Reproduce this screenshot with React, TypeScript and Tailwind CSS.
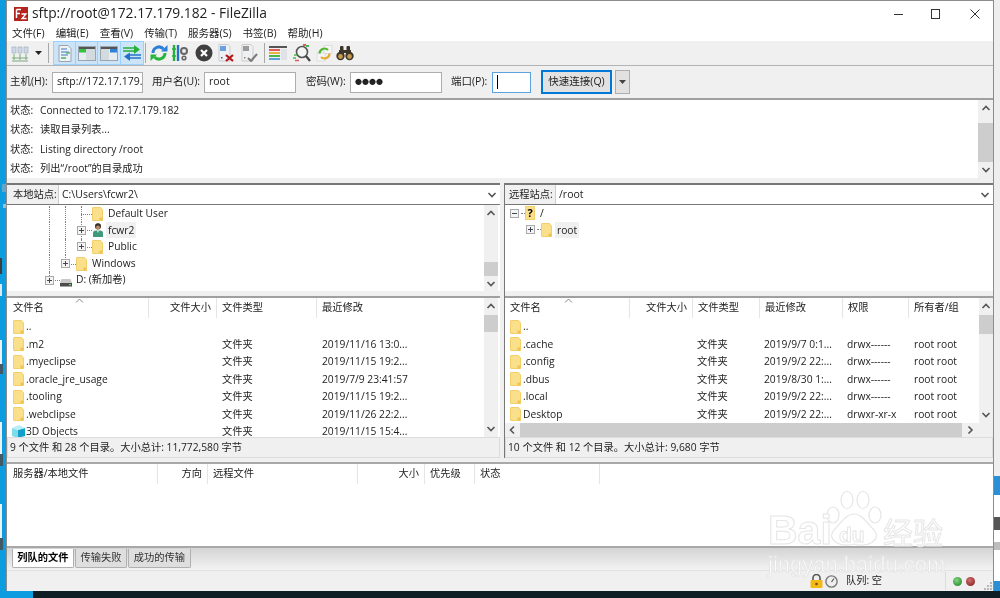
import React from "react";

const Folder = ({ cls = "" }: { cls?: string }) => (
  <svg width="11" height="14" viewBox="0 0 11 14" className={`shrink-0 ${cls}`}>
    <path d="M0.5 1 Q0.5 0.5 1 0.5 H8 Q9 0.5 9.5 1.5 L10.5 3 V13.5 H1 Q0.5 13.5 0.5 13 Z" fill="#fbe08c" stroke="#f3cf6b" />
    <path d="M7.5 13.5 V10.5 H10.5 V13.5 Z" fill="#f0c350" />
  </svg>
);

const Chevron = ({ dir = "up", cls = "" }: { dir?: "up" | "down" | "left" | "right"; cls?: string }) => {
  const p = {
    up: "M1.5 6 L5 2.5 L8.5 6",
    down: "M1.5 3 L5 6.5 L8.5 3",
    left: "M6 1.5 L2.5 5 L6 8.5",
    right: "M3.5 1.5 L7 5 L3.5 8.5",
  }[dir];
  return (
    <svg width="10" height="10" viewBox="0 0 10 10" className={`shrink-0 ${cls}`}>
      <path d={p} fill="none" stroke="#555" strokeWidth="1.6" />
    </svg>
  );
};

const VBar = ({ spacer, thumb, cls = "" }: { spacer: string; thumb: string; cls?: string }) => (
  <div className={`flex flex-col items-center justify-between bg-[#f0f0f0] ${cls}`}>
    <div className="flex flex-col items-center w-full">
      <div className="h-[17px] flex items-center"><Chevron dir="up" /></div>
      <div className={spacer} />
      <div className={`w-full bg-[#cdcdcd] ${thumb}`} />
    </div>
    <div className="h-[17px] flex items-center"><Chevron dir="down" /></div>
  </div>
);

const Expander = ({ minus = false }: { minus?: boolean }) => (
  <span className="w-[9px] h-[9px] border border-[#a9a9a9] bg-[#f4f4f4] flex items-center justify-center shrink-0 relative">
    <svg width="7" height="7" viewBox="0 0 7 7">
      <path d={minus ? "M1 3.5 H6" : "M1 3.5 H6 M3.5 1 V6"} stroke="#445" strokeWidth="1" />
    </svg>
  </span>
);

const Guide = () => <span className="w-[16px] h-full shrink-0 flex justify-center"><span className="h-full border-l border-dotted border-[#808080]" /></span>;

const Branch = ({ plus, last = false }: { plus: boolean; last?: boolean }) => (
  <span className="w-[16px] h-full shrink-0 flex items-center justify-center relative">
    <span className={`absolute left-[8px] top-0 border-l border-dotted border-[#808080] ${last ? "h-1/2" : "h-full"}`} />
    <span className="absolute left-[8px] right-[-3px] top-1/2 border-t border-dotted border-[#808080]" />
    {plus && <Expander />}
  </span>
);

const UserIcon = () => (
  <svg width="12" height="14" viewBox="0 0 12 14" className="shrink-0">
    <circle cx="6" cy="3.6" r="3" fill="#7a5a3c" />
    <circle cx="6" cy="3" r="2.8" fill="#3b3029" />
    <circle cx="6" cy="4.5" r="2" fill="#b98a63" />
    <path d="M1 14 V10 Q1 7.5 4 7.5 H8 Q11 7.5 11 10 V14 Z" fill="#3e9a78" />
    <path d="M5 7.5 L6 10 L7 7.5 Z" fill="#e8f3ee" />
  </svg>
);

const Drive = () => (
  <svg width="12" height="14" viewBox="0 0 12 14" className="shrink-0">
    <path d="M1.5 6 H10.5 L12 10 H0 Z" fill="#c8c8c8" />
    <rect x="0" y="10" width="12" height="3.5" fill="#4b4b4b" />
    <rect x="9" y="11" width="2" height="1.3" fill="#5fdc5f" />
  </svg>
);

const Question = () => (
  <span className="w-[10px] h-[14px] bg-[#fbe08c] border border-[#f3cf6b] text-[11px] leading-[12px] font-bold text-black text-center shrink-0">?</span>
);

const TB = ({ children, cls = "" }: { children?: React.ReactNode; cls?: string }) => (
  <span className={`h-[22px] flex items-center justify-center shrink-0 ${cls}`}>{children}</span>
);

const ToolSep = ({ cls = "" }: { cls?: string }) => <span className={`w-px h-[20px] bg-[#a8a8a8] shrink-0 ${cls}`} />;

const Toolbar = () => (
  <div className="h-[24px] bg-[#f0f0f0] flex items-center pl-[4px]">
    <TB cls="w-[18px]">
      <svg width="18" height="18" viewBox="0 0 18 18">
        <path d="M1 14 H17 M3 10 V16 M9 10 V16 M15 10 V16 M1 17 H17" stroke="#7da87d" strokeWidth="1" fill="none" />
        <rect x="1" y="3" width="4" height="6" fill="#cdd8e6" stroke="#9ab" strokeWidth=".6" />
        <rect x="7" y="3" width="4" height="6" fill="#cdd8e6" stroke="#9ab" strokeWidth=".6" />
        <rect x="13" y="3" width="4" height="6" fill="#cdd8e6" stroke="#9ab" strokeWidth=".6" />
      </svg>
    </TB>
    <TB cls="w-[18px]">
      <svg width="7" height="4" viewBox="0 0 7 4"><path d="M0 0 H7 L3.5 4 Z" fill="#222" /></svg>
    </TB>
    <ToolSep cls="ml-[1px]" />
    <div className="flex ml-[4px] bg-[#cce4f7] border border-[#99d1ff] h-[24px] items-center">
      <TB cls="w-[22px] border-r border-[#99d1ff]">
        <svg width="14" height="17" viewBox="0 0 14 17">
          <path d="M1 .5 H10 L13 3.5 V16.5 H1 Z" fill="#eef1f5" stroke="#9aa5b0" />
          <path d="M3 4 H9 M3 7 H11 M3 10 H10" stroke="#3a78c8" strokeWidth="1.2" />
          <path d="M3 13 H8" stroke="#3fae4a" strokeWidth="1.4" />
          <path d="M8 8 H12" stroke="#3fae4a" strokeWidth="1.2" />
        </svg>
      </TB>
      <TB cls="w-[22px] border-r border-[#99d1ff]">
        <svg width="18" height="15" viewBox="0 0 18 15">
          <rect x=".5" y=".5" width="17" height="14" fill="#e6ecef" stroke="#9aa5b0" />
          <rect x="1" y="1" width="16" height="2" fill="#555" />
          <rect x="1" y="3" width="7" height="3.5" fill="#35c23e" />
          <rect x="8" y="3" width="9" height="11" fill="#d4dbdf" />
        </svg>
      </TB>
      <TB cls="w-[23px] border-r border-[#99d1ff]">
        <svg width="18" height="15" viewBox="0 0 18 15">
          <rect x=".5" y=".5" width="17" height="14" fill="#e6ecef" stroke="#9aa5b0" />
          <rect x="1" y="1" width="16" height="2" fill="#555" />
          <rect x="10" y="3" width="7" height="3.5" fill="#2f80d8" />
          <rect x="1" y="3" width="8" height="11" fill="#d4dbdf" />
        </svg>
      </TB>
      <TB cls="w-[22px]">
        <svg width="18" height="16" viewBox="0 0 18 16">
          <path d="M0 3 H14 M0 6 H14" stroke="#25b03a" strokeWidth="1.7" />
          <path d="M11 0 L17 4.5 L11 9 Z" fill="#25b03a" />
          <path d="M4 10 H18 M4 13 H18" stroke="#2472c8" strokeWidth="1.7" />
          <path d="M7 7.5 L1 11.5 L7 16 Z" fill="#2472c8" />
        </svg>
      </TB>
    </div>
    <ToolSep cls="ml-[1px]" />
    <TB cls="w-[22px] ml-[2px]">
      <svg width="18" height="18" viewBox="0 0 18 18">
        <path d="M3 9 A6 6 0 0 1 13.5 5" fill="none" stroke="#2a7fd6" strokeWidth="3" />
        <path d="M11 7.5 H17.5 V1 Z" fill="#2a7fd6" />
        <path d="M15 9 A6 6 0 0 1 4.5 13" fill="none" stroke="#26b53c" strokeWidth="3" />
        <path d="M7 10.5 H.5 V17 Z" fill="#26b53c" />
      </svg>
    </TB>
    <TB cls="w-[20px]">
      <svg width="16" height="18" viewBox="0 0 16 18">
        <path d="M2 1 V17" stroke="#25b03a" strokeWidth="2.4" />
        <path d="M6 1 V17" stroke="#2472c8" strokeWidth="2.4" />
        <path d="M0 5 H4 M0 12 H4" stroke="#25b03a" strokeWidth="1.4" />
        <circle cx="12" cy="7" r="3" fill="none" stroke="#666" strokeWidth="2" />
        <circle cx="12" cy="14" r="1.8" fill="none" stroke="#666" strokeWidth="1.6" />
      </svg>
    </TB>
    <TB cls="w-[23px] ml-[2px]">
      <svg width="18" height="18" viewBox="0 0 18 18">
        <circle cx="9" cy="9" r="8.5" fill="#3f3f3f" />
        <path d="M6 6 L12 12 M12 6 L6 12" stroke="#fff" strokeWidth="2.2" />
      </svg>
    </TB>
    <TB cls="w-[22px]">
      <svg width="18" height="18" viewBox="0 0 18 18">
        <path d="M2 .5 H11 L13 2.5 V17 H2 Z" fill="#eef1f5" stroke="#c8ccd0" />
        <rect x="3" y="2" width="6" height="5" fill="#6aa0dc" />
        <rect x="4" y="13" width="1.5" height="1.5" fill="#555" />
        <path d="M9 11 L16 17 M16 11 L9 17" stroke="#b01818" strokeWidth="2.2" />
      </svg>
    </TB>
    <TB cls="w-[24px]">
      <svg width="18" height="18" viewBox="0 0 18 18">
        <path d="M2 .5 H11 L13 2.5 V17 H2 Z" fill="#eef0f2" stroke="#ccc" />
        <rect x="3" y="2" width="6" height="5" fill="#9a9a9a" />
        <rect x="4" y="13" width="1.5" height="1.5" fill="#888" />
        <path d="M8 14 L11 17 L17 10" stroke="#7a7a7a" strokeWidth="2" fill="none" />
      </svg>
    </TB>
    <ToolSep cls="ml-[3px]" />
    <TB cls="w-[24px] ml-[1px]">
      <svg width="18" height="15" viewBox="0 0 18 15">
        <rect y="0" width="18" height="2" fill="#555" />
        <rect y="3" width="11" height="2" fill="#e25a5a" />
        <rect y="6" width="11" height="2" fill="#e7b53c" />
        <rect y="9" width="11" height="2" fill="#4cb84c" />
        <rect y="12" width="11" height="2" fill="#5aa0dc" />
        <rect x="12" y="3" width="6" height="11" fill="#dfe3e6" />
      </svg>
    </TB>
    <TB cls="w-[24px]">
      <svg width="18" height="18" viewBox="0 0 18 18">
        <rect x="10" y="0" width="3" height="2" fill="#e25a5a" />
        <rect x="13" y="1" width="3" height="2" fill="#4cb84c" />
        <circle cx="9" cy="8" r="5.5" fill="#f4f4f4" stroke="#555" strokeWidth="1.6" />
        <path d="M13 12 L17 17" stroke="#444" strokeWidth="2.2" />
        <path d="M1 11 H4 M0 14 H3" stroke="#4cb84c" strokeWidth="1.5" />
        <path d="M2 16.5 H6" stroke="#e25a5a" strokeWidth="1.5" />
      </svg>
    </TB>
    <TB cls="w-[20px]">
      <svg width="17" height="17" viewBox="0 0 17 17">
        <rect x="8" y="0.5" width="8" height="8" fill="#f5f5f5" stroke="#ddd" />
        <rect x="1" y="8" width="8" height="8" fill="#f5f5f5" stroke="#ddd" />
        <path d="M3.5 8.5 A5 5 0 0 1 12 5" fill="none" stroke="#52b82e" strokeWidth="2.2" />
        <path d="M13.5 8.5 A5 5 0 0 1 5 12" fill="none" stroke="#e7a82c" strokeWidth="2.2" />
      </svg>
    </TB>
    <TB cls="w-[22px]">
      <svg width="18" height="16" viewBox="0 0 18 16">
        <rect x="4" y="1" width="3.5" height="6" rx="1" fill="#3d3528" />
        <rect x="10.5" y="1" width="3.5" height="6" rx="1" fill="#3d3528" />
        <rect x="7" y="5" width="4" height="3" fill="#3d3528" />
        <path d="M3 5 H8 V10 H3 Z M10 5 H15 V10 H10 Z" fill="#3d3528" />
        <circle cx="4.5" cy="11" r="4.2" fill="#3d3528" />
        <circle cx="13.5" cy="11" r="4.2" fill="#3d3528" />
        <circle cx="4.5" cy="11.5" r="2.4" fill="#c79a4e" />
        <circle cx="13.5" cy="11.5" r="2.4" fill="#c79a4e" />
      </svg>
    </TB>
  </div>
);

const Input = ({ value, cls }: { value: string; cls: string }) => (
  <div className={`h-[21px] bg-white border border-[#adadad] flex items-center pl-[4px] overflow-hidden whitespace-nowrap ${cls}`}>{value}</div>
);

const QuickConnect = () => (
  <div className="h-[33px] bg-[#f0f0f0] border-t border-[#b4b4b4] flex items-center pl-[3px] text-[10.5px]">
    <span className="w-[42px]">主机(H):</span>
    <Input value="sftp://172.17.179." cls="w-[91px]" />
    <span className="ml-[9px] w-[52px]">用户名(U):</span>
    <Input value="root" cls="w-[92px]" />
    <span className="ml-[10px] w-[44px]">密码(W):</span>
    <Input value="●●●●" cls="w-[92px] text-[7px]" />
    <span className="ml-[9px] w-[41px]">端口(P):</span>
    <div className="h-[21px] w-[39px] bg-white border border-[#5ba3e0] flex items-center pl-[4px]"><span className="w-px h-[14px] bg-black" /></div>
    <button className="ml-[10px] w-[71px] h-[24px] bg-[#e1e1e1] border-2 border-[#0078d7] whitespace-nowrap">快速连接(Q)</button>
    <div className="ml-[3px] w-[15px] h-[24px] bg-[#e1e1e1] border border-[#adadad] flex items-center justify-center">
      <svg width="7" height="4" viewBox="0 0 7 4"><path d="M0 0 H7 L3.5 4 Z" fill="#444" /></svg>
    </div>
  </div>
);

const logs = ["Connected to 172.17.179.182", "读取目录列表...", "Listing directory /root", "列出“/root”的目录成功"];

const Log = () => (
  <div className="h-[80px] bg-white border-t-2 border-[#a0a0a0] flex">
    <div className="w-[971px] pt-[1px] pl-[3px]">
      {logs.map((l) => (
        <div key={l} className="h-[19.3px] flex items-center">
          <span className="w-[30px]">状态:</span>
          <span>{l}</span>
        </div>
      ))}
    </div>
    <VBar spacer="h-[6px]" thumb="h-[39px]" cls="w-[15px]" />
  </div>
);

const SiteBar = ({ label, path, w }: { label: string; path: string; w: string }) => (
  <div className="h-[22px] flex bg-white border-t-2 border-b border-t-[#777] border-b-[#777]">
    <div className={`${w} bg-[#f0f0f0] border-r border-[#ccc] flex items-center shrink-0`}>{label}</div>
    <div className="flex-1 flex items-center pl-[3px] text-[10.5px]">{path}</div>
    <div className="w-[16px] flex items-center justify-center"><Chevron dir="down" /></div>
  </div>
);

const Tree = ({ indent, children }: { indent: string; children: React.ReactNode }) => (
  <div className={`h-[16.6px] flex items-center ${indent}`}>{children}</div>
);

const LocalTree = () => (
  <div className="h-[86px] flex bg-white">
    <div className="flex-1 pl-[34px] pt-[0.5px] overflow-hidden">
      <Tree indent="">
        <Guide /><Guide /><Branch plus={false} /><Folder cls="ml-[3px]" /><span className="ml-[4px] px-px">Default User</span>
      </Tree>
      <Tree indent="">
        <Guide /><Guide /><Branch plus /><span className="ml-[3px]"><UserIcon /></span><span className="ml-[2px] px-[2px] bg-[#f0f0f0] leading-[16px]">fcwr2</span>
      </Tree>
      <Tree indent="">
        <Guide /><Guide /><Branch plus last /><Folder cls="ml-[3px]" /><span className="ml-[4px] px-px">Public</span>
      </Tree>
      <Tree indent="">
        <Guide /><Branch plus last /><Folder cls="ml-[3px]" /><span className="ml-[5px]">Windows</span>
      </Tree>
      <Tree indent="">
        <Branch plus last /><span className="ml-[3px]"><Drive /></span><span className="ml-[4px]">D: (新加卷)</span>
      </Tree>
    </div>
    <VBar spacer="h-[40px]" thumb="h-[14px]" cls="w-[14px]" />
    <div className="w-[2px]" />
  </div>
);

const RemoteTree = () => (
  <div className="h-[86px] bg-white pl-[3px]">
    <Tree indent="">
      <span className="w-[12px] flex justify-center"><Expander minus /></span>
      <span className="w-[4px] ml-[1px] border-t border-dotted border-[#808080]" />
      <Question />
      <span className="ml-[5px]">/</span>
    </Tree>
    <Tree indent="pl-[16px]">
      <span className="w-[12px] flex justify-center"><Expander /></span>
      <span className="w-[4px] ml-[1px] border-t border-dotted border-[#808080]" />
      <Folder />
      <span className="ml-[3px] px-[2px] bg-[#f0f0f0] leading-[16px]">root</span>
    </Tree>
  </div>
);

const Caret = ({ cls }: { cls: string }) => (
  <svg width="9" height="5" viewBox="0 0 9 5" className={`absolute top-0 ${cls}`}>
    <path d="M1 4.5 L4.5 1 L8 4.5" fill="none" stroke="#888" />
  </svg>
);

const Th = ({ w, children, right = false, end = false }: { w: string; children?: React.ReactNode; right?: boolean; end?: boolean }) => (
  <div className={`${w} h-[20px] shrink-0 flex items-center px-[5px] whitespace-nowrap ${right ? "justify-end" : ""} ${end ? "" : "border-r border-[#e5e5e5]"}`}>{children}</div>
);

const localRows: [string, string, string][] = [
  ["..", "", ""],
  [".m2", "文件夹", "2019/11/16 13:0..."],
  [".myeclipse", "文件夹", "2019/11/15 19:2..."],
  [".oracle_jre_usage", "文件夹", "2019/7/9 23:41:57"],
  [".tooling", "文件夹", "2019/11/15 19:2..."],
  [".webclipse", "文件夹", "2019/11/26 22:2..."],
  ["3D Objects", "文件夹", "2019/11/15 15:4..."],
];

const remoteRows: [string, string, string, string, string][] = [
  ["..", "", "", "", ""],
  [".cache", "文件夹", "2019/9/7 0:1...", "drwx------", "root root"],
  [".config", "文件夹", "2019/9/2 22:...", "drwx------", "root root"],
  [".dbus", "文件夹", "2019/8/30 1:...", "drwx------", "root root"],
  [".local", "文件夹", "2019/9/2 22:...", "drwx------", "root root"],
  ["Desktop", "文件夹", "2019/9/2 22:...", "drwxr-xr-x", "root root"],
];

const Cube = () => (
  <svg width="13" height="13" viewBox="0 0 13 13" className="shrink-0 -mx-[1px]">
    <path d="M0 3 L6 5 V13 L0 11 Z" fill="#7fdcec" />
    <path d="M6 5 L13 3 V11 L6 13 Z" fill="#12a0c8" />
    <path d="M0 3 L7 0 L13 3 L6 5 Z" fill="#b8eef6" />
  </svg>
);

const LocalList = () => (
  <div className="h-[139px] flex bg-white">
    <div className="flex-1 min-w-0 overflow-hidden relative">
      <Caret cls="left-[68px]" />
      <div className="flex pl-px">
        <Th w="w-[141px]">文件名</Th>
        <Th w="w-[68px]" right>文件大小</Th>
        <Th w="w-[100px]">文件类型</Th>
        <Th w="w-[166px]" end>最近修改</Th>
      </div>
      <div className="overflow-hidden h-[119px] pl-[6px]">
        {localRows.map(([n, t, d]) => (
          <div key={n} className="h-[17.5px] flex items-center whitespace-nowrap">
            {n === "3D Objects" ? <Cube /> : <Folder />}
            <span className="ml-[2px] w-[196px] shrink-0">{n}</span>
            <span className="w-[100px] shrink-0">{t}</span>
            <span>{d}</span>
          </div>
        ))}
      </div>
    </div>
    <VBar spacer="h-[0px]" thumb="h-[17px]" cls="w-[14px]" />
    <div className="w-[2px]" />
  </div>
);

const RemoteList = () => (
  <div className="h-[139px] bg-white flex flex-col">
    <div className="h-[125px] flex">
      <div className="flex-1 min-w-0 overflow-hidden relative">
        <Caret cls="left-[59px]" />
        <div className="flex">
          <Th w="w-[125px]">文件名</Th>
          <Th w="w-[63px]" right>文件大小</Th>
          <Th w="w-[67px]">文件类型</Th>
          <Th w="w-[83px]">最近修改</Th>
          <Th w="w-[66px]">权限</Th>
          <Th w="w-[70px]" end>所有者/组</Th>
        </div>
        <div className="overflow-hidden h-[105px] pl-[5px]">
          {remoteRows.map(([n, t, d, p, o]) => (
            <div key={n} className="h-[17.5px] flex items-center whitespace-nowrap">
              <Folder />
              <span className="ml-[2px] w-[174px] shrink-0">{n}</span>
              <span className="w-[67px] shrink-0">{t}</span>
              <span className="w-[83px] shrink-0">{d}</span>
              <span className="w-[67px] shrink-0">{p}</span>
              <span>{o}</span>
            </div>
          ))}
        </div>
      </div>
      <VBar spacer="h-[0px]" thumb="h-[19px]" cls="w-[14px]" />
    </div>
    <div className="h-[14px] bg-[#f0f0f0] flex items-center">
      <span className="w-[15px] flex justify-center"><Chevron dir="left" /></span>
      <div className="w-[442px] h-full bg-[#cdcdcd]" />
      <span className="w-[15px] flex justify-center"><Chevron dir="right" /></span>
    </div>
  </div>
);

const StatusLine = ({ text }: { text: string }) => (
  <div className="h-[21px] bg-[#f0f0f0] border border-[#dcdcdc] flex items-center pl-[2px]">{text}</div>
);

const Queue = () => (
  <div className="h-[84px] bg-white border-t-2 border-[#a8a8a8]">
    <div className="flex pl-px">
      <Th w="w-[150px]">服务器/本地文件</Th>
      <Th w="w-[50px]" right>方向</Th>
      <Th w="w-[150px]">远程文件</Th>
      <Th w="w-[67px]" right>大小</Th>
      <Th w="w-[50px]">优先级</Th>
      <Th w="w-[125px]">状态</Th>
    </div>
  </div>
);

const Tab = ({ children, active = false, w }: { children: React.ReactNode; active?: boolean; w: string }) => (
  <div className={`${w} h-[19px] flex items-center justify-center border border-t-0 rounded-b-[2px] border-[#b0b0b0] ${active ? "bg-white font-bold text-black" : "bg-[#dedede] text-[#333]"}`}>{children}</div>
);

const Tabs = () => (
  <div className="h-[25px] border-t-2 border-[#a8a8a8] bg-gradient-to-b from-[#d4d4d4] to-[#f4f4f4] flex gap-[1px] pl-[5px] pt-[1px] shadow-[inset_0_-1px_0_#e2e2e2]">
    <Tab active w="w-[62px]">列队的文件</Tab>
    <Tab w="w-[52px]">传输失败</Tab>
    <Tab w="w-[63px]">成功的传输</Tab>
  </div>
);

const StatusBar = () => (
  <div className="flex-1 bg-[#f0f0f0] flex items-center justify-end pr-[1px]">
    <svg width="13" height="14" viewBox="0 0 13 14" className="mr-[2px]">
      <path d="M3 6 V4 A3.5 3.5 0 0 1 10 4 V6" fill="none" stroke="#555" strokeWidth="1.6" />
      <rect x="0.5" y="6" width="12" height="8" rx="1" fill="#f5b916" />
      <circle cx="6.5" cy="10" r="1.3" fill="#6b5210" />
    </svg>
    <svg width="13" height="13" viewBox="0 0 13 13">
      <circle cx="6.5" cy="6.5" r="5.6" fill="#eee" stroke="#777" strokeWidth="1.4" />
      <path d="M6.5 7 L9 3.5" stroke="#555" strokeWidth="1.2" />
    </svg>
    <span className="ml-[8px] w-[99px]">队列: 空</span>
    <span className="w-px h-[18px] bg-[#dcdcdc]" />
    <span className="ml-[7px] w-[9px] h-[9px] rounded-full bg-[radial-gradient(circle_at_40%_35%,#7fd67f,#1e7a1e)]" />
    <span className="ml-[4px] w-[9px] h-[9px] rounded-full bg-[radial-gradient(circle_at_40%_35%,#d27070,#7a1616)]" />
    <svg width="8" height="8" viewBox="0 0 8 8" className="ml-[9px] self-end mb-[1px]">
      <path d="M6 0 H8 V2 H6 Z M3 3 H5 V5 H3 Z M6 3 H8 V5 H6 Z M0 6 H2 V8 H0 Z M3 6 H5 V8 H3 Z M6 6 H8 V8 H6 Z" fill="#b8b8b8" />
    </svg>
  </div>
);

const LeftStrip = () => (
  <div className="w-[6px] flex flex-col bg-[#0e9ce0]">
    <div className="h-[184px]" />
    <div className="h-[8px] w-[4px] ml-auto bg-[#5fa8cc]" />
    <div className="h-[12px]" />
    <div className="h-[4px] w-[3px] ml-auto bg-[#8fc4dc]" />
    <div className="h-[50px]" />
    <div className="h-[16px] w-[2px] bg-[#3d3d3d]" />
    <div className="h-[10px]" />
    <div className="h-[12px] w-[2px] bg-[#dfe9ee]" />
    <div className="h-[44px]" />
    <div className="h-[24px] w-[2px] bg-[#eef2f4]" />
    <div className="h-[10px] w-[3px] bg-[#3f5a66]" />
    <div className="h-[48px]" />
    <div className="h-[32px] w-[2px] bg-[#eef2f4]" />
    <div className="h-[12px] w-[3px] bg-[#3f5a66]" />
    <div className="h-[38px]" />
    <div className="h-[34px] w-[2px] bg-[#eef2f4]" />
    <div className="h-[12px] w-[3px] bg-[#3f5a66]" />
  </div>
);

const RightStrip = () => (
  <div className="w-[6px] flex flex-col bg-[#eeeeee]">
    <div className="h-[476px]" />
    <div className="h-[19px] bg-[#2b8fd6]" />
    <div className="h-[22px] bg-white" />
    <div className="h-[13px] bg-[#555]" />
    <div className="h-[12px] bg-white" />
    <div className="h-[8px] bg-[#bdbdbd]" />
    <div className="h-[31px] bg-white" />
    <div className="h-[10px] bg-[#2b8fd6]" />
  </div>
);

const Watermark = () => (
  <div className="absolute left-[768px] top-[490px] w-[180px] h-[85px] pointer-events-none text-white font-['Liberation_Sans',sans-serif] [-webkit-text-stroke:1px_#e6e6e6] whitespace-nowrap">
    <svg width="68" height="58" viewBox="0 0 68 58" className="absolute left-[56px] top-0">
      <g fill="#fff" stroke="#e6e6e6" strokeWidth="1.2">
        <ellipse cx="9" cy="25" rx="6" ry="8" />
        <ellipse cx="23" cy="10" rx="6" ry="8.5" />
        <ellipse cx="39" cy="10" rx="6" ry="8.5" />
        <ellipse cx="51" cy="25" rx="6" ry="8" />
        <path d="M30 24 C22 24 16 34 10 40 C2 50 16 58 30 54 C44 58 58 50 50 40 C44 34 38 24 30 24 Z" />
      </g>
    </svg>
    <span className="absolute left-0 top-[20px] text-[41px] leading-[41px] font-bold">Bai</span>
    <span className="absolute left-[71px] top-[34px] text-[21px] leading-[21px] font-bold">du</span>
    <span className="absolute left-[115px] top-[26px] text-[30px] leading-[30px] font-['Noto_Sans_CJK_SC',sans-serif]">经验</span>
    <span className="absolute left-0 top-[65px] text-[22px] leading-[20px]">jingyan.baidu.com</span>
  </div>
);

export default function App() {
  return (
    <div className="w-[1000px] h-[598px] relative overflow-hidden flex flex-col bg-[#0f1d24] font-['Open_Sans','Noto_Sans_CJK_SC',sans-serif] text-[10.25px] text-[#222] blur-[0.35px]">
      <div className="h-[591px] flex">
        <LeftStrip />
        <div className="w-[988px] flex flex-col border border-b-0 border-[#8c8c8c] bg-[#f0f0f0]">
          <div className="h-[22px] bg-white flex items-center pl-[7px] pt-[3px]">
            <svg width="14" height="14" viewBox="0 0 14 14">
              <rect width="14" height="14" fill="#b3241c" />
              <path d="M2.5 2.5 H7 M2.5 2.5 V11 M2.5 6.5 H6" stroke="#fff" strokeWidth="1.5" fill="none" />
              <path d="M7.5 7 H12 L8 11.5 H12.5" stroke="#fff" strokeWidth="1.3" fill="none" />
            </svg>
            <span className="ml-[4px] text-[13.8px] flex-1">sftp://root@172.17.179.182 - FileZilla</span>
            <svg width="10" height="10" viewBox="0 0 10 10" className="mr-[27px]"><path d="M0 5.5 H9" stroke="#333" /></svg>
            <svg width="10" height="10" viewBox="0 0 10 10" className="mr-[29px]"><rect x=".5" y=".5" width="8" height="9" fill="none" stroke="#333" /></svg>
            <svg width="10" height="10" viewBox="0 0 10 10" className="mr-[13px]"><path d="M.5 .5 L9.5 9.5 M9.5 .5 L.5 9.5" stroke="#333" /></svg>
          </div>
          <div className="h-[18px] bg-white flex items-center gap-[11px] pl-[5px] pt-[3px] text-[10.5px]">
            {["文件(F)", "编辑(E)", "查看(V)", "传输(T)", "服务器(S)", "书签(B)", "帮助(H)"].map((m) => (
              <span key={m}>{m}</span>
            ))}
          </div>
          <Toolbar />
          <QuickConnect />
          <Log />
          <div className="h-[5px] bg-[#f0f0f0]" />
          <div className="flex gap-[4px]">
            <div className="w-[493px] flex flex-col shrink-0">
              <SiteBar label="本地站点:" path="C:\Users\fcwr2\" w="w-[52px] pl-[6px]" />
              <LocalTree />
              <div className="h-[5px] bg-[#f0f0f0]" />
              <div className="border-t-2 border-[#a0a0a0]"><LocalList /></div>
              <StatusLine text="9 个文件 和 28 个目录。大小总计: 11,772,580 字节" />
            </div>
            <div className="flex-1 min-w-0 flex flex-col border-l border-[#777]">
              <SiteBar label="远程站点:" path="/root" w="w-[51px] pl-[4px]" />
              <RemoteTree />
              <div className="h-[5px] bg-[#f0f0f0]" />
              <div className="border-t-2 border-[#a0a0a0]"><RemoteList /></div>
              <StatusLine text="10 个文件 和 12 个目录。大小总计: 9,680 字节" />
            </div>
          </div>
          <div className="h-[4px] bg-[#f0f0f0]" />
          <Queue />
          <Tabs />
          <StatusBar />
        </div>
        <RightStrip />
      </div>
      <div className="h-[7px] flex">
        <div className="w-[33px] bg-[#0e9ce0]" />
      </div>
      <Watermark />
    </div>
  );
}
